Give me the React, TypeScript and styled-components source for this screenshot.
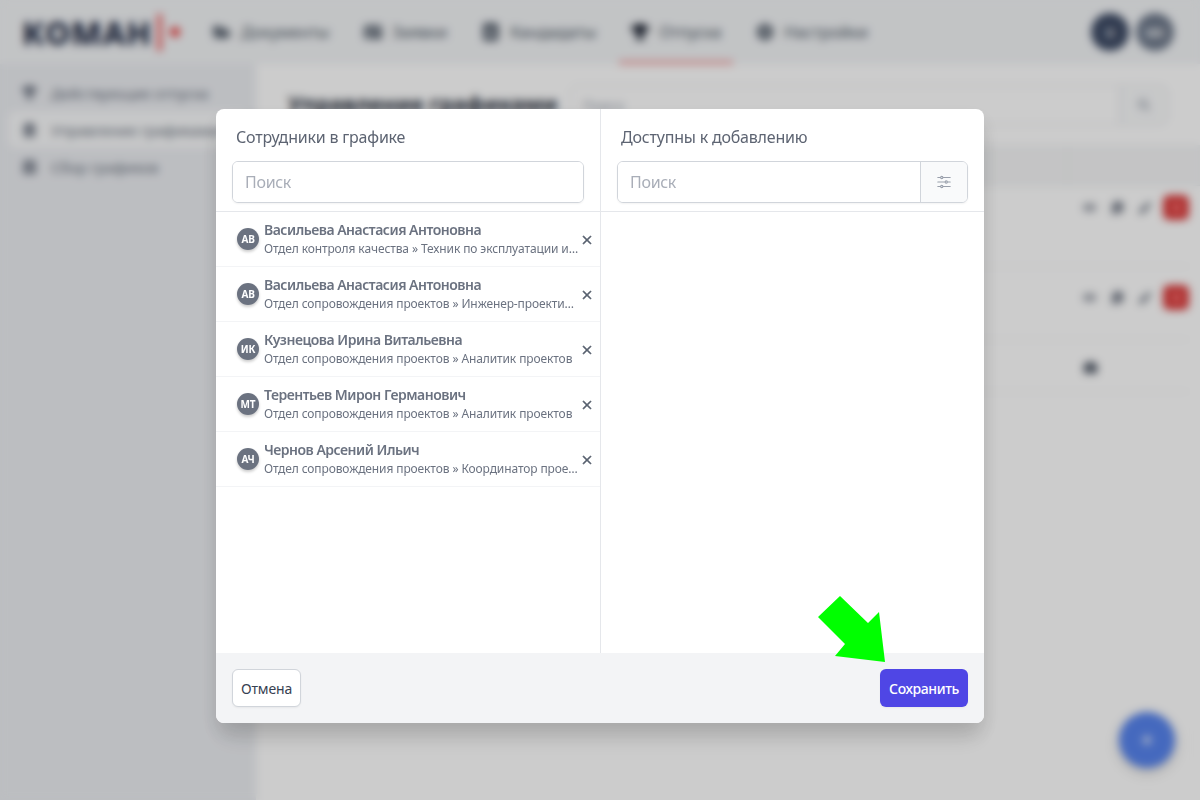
import { createGlobalStyle } from 'styled-components';
import styled from 'styled-components';
import { FaFolderOpen, FaTrophy, FaCog, FaIdCard, FaAddressBook, FaEye, FaCopy, FaPen, FaTrash, FaCamera, FaSearch, FaPlus, FaClipboardList, FaCalendarAlt } from 'react-icons/fa';
import { HiOutlineAdjustmentsHorizontal, HiXMark } from 'react-icons/hi2';

const GlobalStyle = createGlobalStyle`
  html, body {
    margin: 0;
    padding: 0;
    height: 100%;
    background: #fff;
    font-family: "Noto Sans", "Liberation Sans", sans-serif;
  }
  * { box-sizing: border-box; }
`;

const Page = styled.div`
  width: 1200px;
  height: 800px;
  overflow: hidden;
  display: flex;
  flex-direction: column;
  background: #fff;
`;

const TopBar = styled.header`
  height: 64px;
  flex: none;
  display: flex;
  align-items: center;
  padding: 0 26px 0 22px;
  background: #f3f5f7;
`;

const Logo = styled.div`
  display: flex;
  align-items: center;
  width: 179px;
  font-size: 32px;
  font-weight: 800;
  letter-spacing: 1px;
  color: #1f2a44;
`;

const LogoBar = styled.span`
  width: 5px;
  height: 37px;
  margin-left: 5px;
  background: #ef6a6a;
`;

const LogoDot = styled.span`
  width: 10px;
  height: 10px;
  margin-left: 8px;
  border-radius: 50%;
  background: #ea3f3f;
`;

const Nav = styled.nav`
  display: flex;
  flex: 1;
  height: 100%;
  gap: 11px;
`;

const NavItem = styled.div<{ $active?: boolean }>`
  display: flex;
  align-items: center;
  gap: 10px;
  padding: 3px 12px 0;
  font-size: 16px;
  color: #4b5563;
  border-bottom: 3px solid ${(p) => (p.$active ? '#f08a8a' : 'transparent')};

  svg {
    color: ${(p) => (p.$active ? '#111827' : '#4b5563')};
  }
`;

const Avatars = styled.div`
  display: flex;
  gap: 7px;
`;

const TopAvatar = styled.div<{ $dark?: boolean }>`
  width: 38px;
  height: 38px;
  border-radius: 50%;
  display: flex;
  align-items: center;
  justify-content: center;
  font-size: 11px;
  font-weight: 700;
  color: #fff;
  background: ${(p) => (p.$dark ? '#3f4c66' : '#6f7a8c')};
`;

const Content = styled.div`
  flex: 1;
  display: flex;
  min-height: 0;
`;

const Side = styled.aside`
  width: 256px;
  flex: none;
  padding: 10px 8px;
  background: #eceef2;
  display: flex;
  flex-direction: column;
`;

const SideItem = styled.div<{ $active?: boolean }>`
  display: flex;
  align-items: center;
  gap: 14px;
  height: 37px;
  padding: 0 14px;
  border-radius: 8px;
  font-size: 15px;
  letter-spacing: -0.2px;
  color: #6b7280;
  background: ${(p) => (p.$active ? '#f9fafb' : 'transparent')};
`;

const Main = styled.main`
  flex: 1;
  padding: 21px 32px 0;
  display: flex;
  flex-direction: column;
`;

const MainHead = styled.div`
  display: flex;
  align-items: flex-start;
  gap: 12px;
`;

const MainTitle = styled.h1`
  margin: 0;
  font-size: 22px;
  line-height: 36px;
  font-weight: 700;
  letter-spacing: -0.15px;
  color: #1f2937;
  white-space: nowrap;
`;

const MainSearch = styled.div`
  flex: 1;
  display: flex;
  align-items: center;
  height: 40px;
  padding: 0 12px;
  font-size: 14px;
  color: #9ca3af;
  border: 1px solid #e5e7eb;
  border-radius: 8px 0 0 8px;
`;

const MainSearchBtn = styled.div`
  width: 48px;
  height: 40px;
  margin-left: -12px;
  display: flex;
  align-items: center;
  justify-content: center;
  color: #9ca3af;
  background: #f9fafb;
  border: 1px solid #e5e7eb;
  border-radius: 0 8px 8px 0;
`;

const TableHead = styled.div`
  height: 41px;
  margin: 20px -32px 0;
  display: flex;
  justify-content: flex-end;
  background: #f5f6f7;
  border-bottom: 1px solid #eceef0;
`;

const HeadCell = styled.div`
  width: 133px;
  border-left: 1px solid #e9eaec;
`;

const TableRow = styled.div<{ $h: number; $top: number }>`
  height: ${(p) => p.$h}px;
  padding-top: ${(p) => p.$top}px;
  margin-right: -21px;
  display: flex;
  justify-content: flex-end;
  align-items: flex-start;
  color: #6b7280;
  font-size: 12px;
  border-bottom: 1px solid #f0f1f3;
`;

const RowActionsBox = styled.div`
  display: flex;
  align-items: center;
  gap: 15px;
`;

const DangerBtn = styled.span`
  width: 26px;
  height: 25px;
  margin-left: -3px;
  border-radius: 6px;
  background: #dc3c3c;
  display: flex;
  align-items: center;
  justify-content: center;
  color: #f98080;
`;

const CameraSlot = styled.span`
  margin-right: 92px;
  color: #374151;
`;

const Fab = styled.div`
  position: absolute;
  left: 1119px;
  top: 712px;
  width: 56px;
  height: 56px;
  border-radius: 50%;
  display: flex;
  align-items: center;
  justify-content: center;
  color: #fff;
  background: #5784ee;
  box-shadow: 0 4px 12px rgba(0, 0, 0, 0.2);
`;

const Backdrop = styled.div`
  position: fixed;
  inset: 0;
  display: flex;
  align-items: flex-start;
  justify-content: center;
  padding-top: 109px;
  background: rgba(0, 0, 0, 0.2);
  backdrop-filter: blur(4px);
`;

const Modal = styled.div`
  width: 768px;
  height: 614px;
  display: flex;
  flex-direction: column;
  border-radius: 8px;
  overflow: hidden;
  background: #fff;
  box-shadow: 0 20px 25px -5px rgba(0, 0, 0, 0.1), 0 10px 20px rgba(0, 0, 0, 0.1);
`;

const Columns = styled.div`
  flex: 1;
  min-height: 0;
  display: grid;
  grid-template-columns: 385px 383px;
`;

const Column = styled.section<{ $divided?: boolean }>`
  display: flex;
  flex-direction: column;
  min-width: 0;
  border-right: ${(p) => (p.$divided ? '1px solid #e5e7eb' : 'none')};
`;

const ColumnHead = styled.div`
  flex: none;
  height: 103px;
  padding: 17px 16px 0;
  border-bottom: 1px solid #e5e7eb;
`;

const ColumnTitle = styled.h3`
  margin: 0 0 13px 4px;
  font-size: 16px;
  line-height: 22px;
  font-weight: 400;
  letter-spacing: -0.2px;
  color: #5d6472;
`;

const SearchGroup = styled.div`
  display: flex;
  height: 42px;
  border: 1px solid #d1d5db;
  border-radius: 6px;
  overflow: hidden;
  box-shadow: 0 1px 2px rgba(0, 0, 0, 0.05);
`;

const SearchInput = styled.input`
  flex: 1;
  min-width: 0;
  padding: 0 12px;
  border: none;
  outline: none;
  font-family: inherit;
  font-size: 16px;
  letter-spacing: -0.3px;
  background: #fff;

  &::placeholder {
    color: #a9aeb8;
    opacity: 1;
  }
`;

const FilterBtn = styled.button`
  width: 47px;
  flex: none;
  padding: 0;
  display: flex;
  align-items: center;
  justify-content: center;
  border: none;
  border-left: 1px solid #d1d5db;
  color: #9aa0ac;
  background: #f9fafb;
`;

const RowList = styled.div`
  flex: 1;
  min-height: 0;
`;

const Row = styled.div`
  height: 55px;
  display: flex;
  align-items: center;
  padding: 0 6px 0 21px;
  border-bottom: 1px solid #f3f4f6;
`;

const Initials = styled.div`
  width: 22px;
  height: 22px;
  flex: none;
  margin: -1px 5px 0 0;
  border-radius: 50%;
  display: flex;
  align-items: center;
  justify-content: center;
  font-size: 10px;
  font-weight: 700;
  letter-spacing: -0.2px;
  color: #fff;
  background: #6b7280;
  box-shadow: 0 2px 3px rgba(0, 0, 0, 0.2);
`;

const RowText = styled.div`
  flex: 1;
  min-width: 0;
  margin-top: -1px;
`;

const RowName = styled.div`
  font-size: 14px;
  line-height: 17px;
  font-weight: 600;
  letter-spacing: -0.5px;
  color: #6b7280;
  white-space: nowrap;
`;

const RowMeta = styled.div`
  margin: 3px 0 -1px;
  font-size: 12px;
  line-height: 16px;
  letter-spacing: -0.11px;
  color: #6b7280;
  white-space: nowrap;
  overflow: hidden;
  text-overflow: ellipsis;
`;

const RemoveBtn = styled.button`
  width: 14px;
  height: 14px;
  flex: none;
  margin: 1px 0 0 0;
  padding: 0;
  display: flex;
  align-items: center;
  justify-content: center;
  border: none;
  background: none;
  color: #4b5563;
`;

const Footer = styled.footer`
  flex: none;
  height: 70px;
  padding: 0 16px;
  display: flex;
  align-items: center;
  justify-content: space-between;
  background: #f3f4f6;
`;

const CancelBtn = styled.button`
  height: 38px;
  padding: 0 8px;
  font-family: inherit;
  font-size: 14px;
  font-weight: 400;
  letter-spacing: -0.15px;
  color: #374151;
  background: #fff;
  border: 1px solid #d1d5db;
  border-radius: 6px;
  box-shadow: 0 1px 2px rgba(0, 0, 0, 0.05);
`;

const SaveBtn = styled.button`
  height: 38px;
  padding: 0 9px;
  font-family: inherit;
  font-size: 14px;
  font-weight: 500;
  letter-spacing: -0.38px;
  color: #fff;
  background: #4f46e5;
  border: none;
  border-radius: 6px;
  box-shadow: 0 1px 2px rgba(0, 0, 0, 0.05);
`;

const Arrow = styled.svg`
  position: fixed;
  left: 810px;
  top: 590px;
`;

const employees = [
  { initials: 'АВ', name: 'Васильева Анастасия Антоновна', meta: 'Отдел контроля качества » Техник по эксплуатации и обслуживанию' },
  { initials: 'АВ', name: 'Васильева Анастасия Антоновна', meta: 'Отдел сопровождения проектов » Инженер-проектировщик систем' },
  { initials: 'ИК', name: 'Кузнецова Ирина Витальевна', meta: 'Отдел сопровождения проектов » Аналитик проектов' },
  { initials: 'МТ', name: 'Терентьев Мирон Германович', meta: 'Отдел сопровождения проектов » Аналитик проектов' },
  { initials: 'АЧ', name: 'Чернов Арсений Ильич', meta: 'Отдел сопровождения проектов » Координатор проектов отдела' },
];

const RowActions = () => (
  <RowActionsBox>
    <FaEye size={13} />
    <FaCopy size={13} />
    <FaPen size={12} />
    <DangerBtn><FaTrash size={9} /></DangerBtn>
  </RowActionsBox>
);

export default function App() {
  return (
    <>
      <GlobalStyle />
      <Page>
        <TopBar>
          <Logo>КОМАН<LogoBar /><LogoDot /></Logo>
          <Nav>
            <NavItem><FaFolderOpen size={18} />Документы</NavItem>
            <NavItem><FaIdCard size={18} />Заявки</NavItem>
            <NavItem><FaAddressBook size={18} />Кандидаты</NavItem>
            <NavItem $active><FaTrophy size={18} />Отпуска</NavItem>
            <NavItem><FaCog size={18} />Настройки</NavItem>
          </Nav>
          <Avatars>
            <TopAvatar $dark>0</TopAvatar>
            <TopAvatar>МК</TopAvatar>
          </Avatars>
        </TopBar>
        <Content>
          <Side>
            <SideItem><FaTrophy size={15} />Действующие отпуска</SideItem>
            <SideItem $active><FaClipboardList size={15} />Управление графиками</SideItem>
            <SideItem><FaCalendarAlt size={15} />Сбор графиков</SideItem>
          </Side>
          <Main>
            <MainHead>
              <MainTitle>Управление графиками</MainTitle>
              <MainSearch>Поиск</MainSearch>
              <MainSearchBtn><FaSearch size={12} /></MainSearchBtn>
            </MainHead>
            <TableHead><HeadCell /></TableHead>
            <TableRow $h={81} $top={9}><RowActions /></TableRow>
            <TableRow $h={73} $top={18}><RowActions /></TableRow>
            <TableRow $h={52} $top={21}><CameraSlot><FaCamera size={13} /></CameraSlot></TableRow>
          </Main>
        </Content>
        <Fab><FaPlus size={12} /></Fab>
      </Page>
      <Backdrop>
        <Modal>
          <Columns>
            <Column $divided>
              <ColumnHead>
                <ColumnTitle>Сотрудники в графике</ColumnTitle>
                <SearchGroup><SearchInput placeholder="Поиск" /></SearchGroup>
              </ColumnHead>
              <RowList>
                {employees.map((e, i) => (
                  <Row key={i}>
                    <Initials>{e.initials}</Initials>
                    <RowText>
                      <RowName>{e.name}</RowName>
                      <RowMeta>{e.meta}</RowMeta>
                    </RowText>
                    <RemoveBtn><HiXMark size={14} strokeWidth={1.5} /></RemoveBtn>
                  </Row>
                ))}
              </RowList>
            </Column>
            <Column>
              <ColumnHead>
                <ColumnTitle>Доступны к добавлению</ColumnTitle>
                <SearchGroup>
                  <SearchInput placeholder="Поиск" />
                  <FilterBtn><HiOutlineAdjustmentsHorizontal size={18} /></FilterBtn>
                </SearchGroup>
              </ColumnHead>
              <RowList />
            </Column>
          </Columns>
          <Footer>
            <CancelBtn>Отмена</CancelBtn>
            <SaveBtn>Сохранить</SaveBtn>
          </Footer>
        </Modal>
      </Backdrop>
      <Arrow width="90" height="90" viewBox="0 0 90 90">
        <polygon points="30,6 8,27 35,54 25,66 75,72 69,22 58,33" fill="#00ff00" />
      </Arrow>
    </>
  );
}
